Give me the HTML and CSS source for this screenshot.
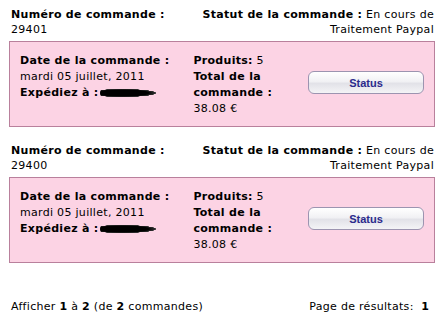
FILE: index.html
```html
<!DOCTYPE html>
<html lang="fr">
<head>
  <meta charset="UTF-8">
  <title>Historique des commandes</title>
  <link rel="stylesheet" href="styles.css">
</head>
<body>
  <div class="page">

    <div class="order">
      <div class="order-head">
        <div class="order-num"><b>Numéro de commande :</b><br>29401</div>
        <div class="order-status"><b>Statut de la commande :</b> <span>En cours de</span><br><span>Traitement Paypal</span></div>
      </div>
      <div class="order-box">
        <div class="col-date">
          <b>Date de la commande :</b><br>
          mardi 05 juillet, 2011<br>
          <b>Expédiez à :</b><span class="scribble"></span>
        </div>
        <div class="col-total">
          <b>Produits:</b> 5<br>
          <b>Total de la commande :</b><br>
          38.08 €
        </div>
        <div class="col-btn">
          <button class="status-btn">Status</button>
        </div>
      </div>
    </div>

    <div class="order">
      <div class="order-head">
        <div class="order-num"><b>Numéro de commande :</b><br>29400</div>
        <div class="order-status"><b>Statut de la commande :</b> <span>En cours de</span><br><span>Traitement Paypal</span></div>
      </div>
      <div class="order-box">
        <div class="col-date">
          <b>Date de la commande :</b><br>
          mardi 05 juillet, 2011<br>
          <b>Expédiez à :</b><span class="scribble"></span>
        </div>
        <div class="col-total">
          <b>Produits:</b> 5<br>
          <b>Total de la commande :</b><br>
          38.08 €
        </div>
        <div class="col-btn">
          <button class="status-btn">Status</button>
        </div>
      </div>
    </div>

    <div class="results">
      <div>Afficher <b>1</b> à <b>2</b> (de <b>2</b> commandes)</div>
      <div>Page de résultats: &nbsp;<b>1</b>&nbsp;</div>
    </div>

  </div>
</body>
</html>
```

FILE: styles.css
```css
* { box-sizing: border-box; }
body {
  margin: 0;
  background-color: #fff;
  color: #000;
  font-family: 'DejaVu Sans', Verdana, sans-serif;
  font-size: 11px;
  letter-spacing: 0.3px;
}

.page {
  padding: 7px 9px 0 9px;
}

.order {
  margin-bottom: 16px;
}

.order-head {
  display: flex;
  justify-content: space-between;
  padding: 0 1px 0 2px;
  line-height: 15px;
}

.order-num {
  width: 190px;
}

.order-status {
  width: 240px;
  text-align: right;
}

.order-box {
  display: flex;
  margin-top: 4px;
  height: 86px;
  padding: 11px 10px 0 10px;
  background-color: #fcd3e4;
  border: 1px solid #b9809c;
  line-height: 16px;
}

.col-date {
  width: 177px;
}

.col-total {
  width: 117px;
}

.col-btn {
  flex-grow: 1;
  padding-top: 18px;
}

.status-btn {
  width: 116px;
  height: 23px;
  border: 1px solid #9c94b0;
  border-radius: 6px;
  background: linear-gradient(#ffffff, #f1f1f4 45%, #e2e2e8 55%, #f4f4f6);
  color: #2b2a8c;
  font-family: 'Liberation Sans', Arial, sans-serif;
  font-size: 11px;
  font-weight: bold;
  letter-spacing: 0;
  cursor: pointer;
}

.scribble {
  display: inline-block;
  width: 56px;
  height: 8px;
  margin-left: 1px;
  background: radial-gradient(ellipse at 40% 50%, #000 55%, #333 70%, transparent 72%);
  border-radius: 4px;
  vertical-align: middle;
}

.results {
  display: flex;
  justify-content: space-between;
  margin-top: 37px;
  padding: 0 2px;
}
```
